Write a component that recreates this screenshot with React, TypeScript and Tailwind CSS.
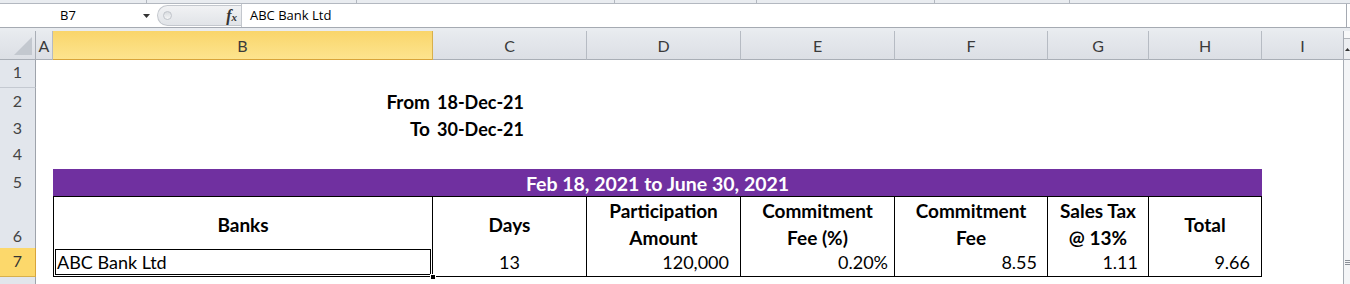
import React from "react";

const COLS = "grid grid-cols-[36px_17px_380px_154px_154px_154px_153px_101px_113px_81px_7px]";
const FONT = { fontFamily: "Lato, 'Open Sans', sans-serif" };

function ColHeader({ label, selected, last }: { label: string; selected?: boolean; last?: boolean }) {
  return (
    <div
      className={
        "flex items-center justify-center pt-[2px] text-[16px] border-b " +
        (selected
          ? "bg-gradient-to-b from-[#f9d56a] to-[#fde48e] border-r border-r-[#d8b04c] border-b-[#d8a43a] text-[#3a3a3a]"
          : "bg-gradient-to-b from-[#e8ebef] to-[#dcdfe5] border-b-[#a9aeb6] text-[#3a3a3a] " + (last ? "" : "border-r border-r-[#b6bbc3]"))
      }
    >
      {label}
    </div>
  );
}

function RowHeader({ n, selected }: { n?: number; selected?: boolean }) {
  return (
    <div
      className={
        "flex items-end justify-center pb-[3px] text-[16px] border-r border-b " +
        (selected
          ? "bg-[#fcd86b] border-r-[#d8a43a] border-b-[#d8b04c] text-[#333]"
          : "bg-[#e2e6ec] border-r-[#9ea3ab] border-b-[#c4c9d1] text-[#444]")
      }
    >
      {n}
    </div>
  );
}

function Scroll({ grip }: { grip?: boolean }) {
  return (
    <div className="bg-[#f4f5f7] border-l border-[#a7acb4] flex items-center justify-end">
      {grip ? (
        <div className="flex flex-col gap-[1px]">
          <div className="w-[5px] h-px bg-[#8a8f97]" />
          <div className="w-[5px] h-px bg-[#8a8f97]" />
          <div className="w-[5px] h-px bg-[#8a8f97]" />
        </div>
      ) : null}
    </div>
  );
}

function EmptyCells({ count }: { count: number }) {
  return (
    <>
      {Array.from({ length: count }).map((_, i) => (
        <div key={i} className="bg-white" />
      ))}
    </>
  );
}

export default function App() {
  const th = "flex items-center justify-center text-center font-bold text-[19px] leading-[27px] text-black border-r border-t border-b border-black bg-white";
  const td = "flex items-center text-[18px] text-black border-r border-b border-black bg-white";
  return (
    <div className="w-[1350px] h-[284px] overflow-hidden bg-white select-none" style={FONT}>
      {/* ribbon bottom strip */}
      <div className="flex h-[4px] bg-[#e9ecf0] border-b border-[#b3b8c0]">
        <div className="w-[147px] border-r border-[#b3b8c0]" />
        <div className="w-[210px] border-r border-[#b3b8c0]" />
        <div className="w-[258px] border-r border-[#b3b8c0]" />
        <div className="w-[142px] border-r border-[#b3b8c0]" />
        <div className="w-[178px] border-r border-[#b3b8c0]" />
        <div className="w-[135px] border-r border-[#b3b8c0]" />
        <div className="flex-1" />
      </div>
      {/* formula bar */}
      <div className="flex h-[24px] border-b border-[#a5aab2] bg-white" style={{ fontFamily: "'Open Sans', 'Noto Sans', sans-serif" }}>
        <div className="w-[136px] flex items-center justify-center text-[13px] text-black">B7</div>
        <div className="w-[21px] flex items-center justify-center">
          <svg width="7" height="4" viewBox="0 0 7 4"><polygon points="0,0 7,0 3.5,4" fill="#333" /></svg>
        </div>
        <div className="w-[84px] flex items-center rounded-l-full bg-gradient-to-b from-[#f1f2f4] to-[#e1e4e8] border-l border-t border-b border-[#c3c7cd] my-[1px]">
          <div className="ml-[5px] w-[9px] h-[9px] rounded-full bg-gradient-to-b from-[#d9dce0] to-[#f5f6f7] border border-[#c0c4ca]" />
          <div className="flex-1" />
          <span className="mr-[4px] italic font-bold text-[16px] leading-none text-[#333]" style={{ fontFamily: "'Liberation Serif', serif" }}>
            f<span className="text-[11px]">x</span>
          </span>
        </div>
        <div className="flex-1 flex items-center pl-[8px] text-[13px] text-black border-l border-[#c3c7cd] border-r border-r-[#a5aab2] mr-[3px]">
          ABC Bank Ltd
        </div>
      </div>
      <div className="h-[3px] bg-[#e9ecf0]" />

      {/* column header */}
      <div className={COLS + " h-[29px]"}>
        <div className="relative bg-gradient-to-b from-[#e8ebef] to-[#dcdfe5] border-r border-b border-[#a9aeb6]">
          <svg className="absolute left-0 top-0" width="36" height="29" viewBox="0 0 36 29">
            <polygon points="32,6 32,24 14,24" fill="#c3c8cf" />
          </svg>
        </div>
        <ColHeader label="A" />
        <ColHeader label="B" selected />
        <ColHeader label="C" />
        <ColHeader label="D" />
        <ColHeader label="E" />
        <ColHeader label="F" />
        <ColHeader label="G" />
        <ColHeader label="H" />
        <ColHeader label="I" last />
        <div className="bg-[#eceef1] border-l border-b border-[#a7acb4] flex flex-col">
          <div className="h-[8px] border-b border-[#b0b4ba] bg-[#f7f8f9]" />
          <div className="flex-1 flex items-center justify-center">
            <svg width="5" height="3" viewBox="0 0 5 3"><polygon points="2.5,0 5,3 0,3" fill="#333" /></svg>
          </div>
        </div>
      </div>

      {/* row 1 */}
      <div className={COLS + " h-[28px]"}>
        <RowHeader n={1} />
        <EmptyCells count={9} />
        <Scroll />
      </div>
      {/* row 2 */}
      <div className={COLS + " h-[27px]"}>
        <RowHeader n={2} />
        <div />
        <div className="flex items-center justify-end pr-[3px] font-bold text-[19px]">From</div>
        <div className="flex items-center pl-[4px] font-bold text-[18px] whitespace-nowrap">18-Dec-21</div>
        <EmptyCells count={6} />
        <Scroll />
      </div>
      {/* row 3 */}
      <div className={COLS + " h-[27px]"}>
        <RowHeader n={3} />
        <div />
        <div className="flex items-center justify-end pr-[3px] font-bold text-[19px]">To</div>
        <div className="flex items-center pl-[4px] font-bold text-[18px] whitespace-nowrap">30-Dec-21</div>
        <EmptyCells count={6} />
        <Scroll />
      </div>
      {/* row 4 */}
      <div className={COLS + " h-[27px]"}>
        <RowHeader n={4} />
        <EmptyCells count={9} />
        <Scroll />
      </div>
      {/* row 5 */}
      <div className={COLS + " h-[27px]"}>
        <RowHeader n={5} />
        <div />
        <div className="col-span-7 bg-[#7030a0] flex items-center justify-center text-white font-bold text-[19.5px]">
          Feb 18, 2021 to June 30, 2021
        </div>
        <div />
        <Scroll />
      </div>
      {/* row 6 */}
      <div className={COLS + " h-[52px]"}>
        <RowHeader n={6} />
        <div />
        <div className={th + " border-l"}>Banks</div>
        <div className={th}>Days</div>
        <div className={th}>Participation<br />Amount</div>
        <div className={th}>Commitment<br />Fee (%)</div>
        <div className={th}>Commitment<br />Fee</div>
        <div className={th}>Sales Tax<br />@ 13%</div>
        <div className={th}>Total</div>
        <div />
        <Scroll />
      </div>
      {/* row 7 */}
      <div className={COLS + " h-[29px]"}>
        <RowHeader n={7} selected />
        <div />
        <div className={td + " border-l pl-[3px] relative"}>
          ABC Bank Ltd
          <div className="absolute inset-[1px] border border-black pointer-events-none" />
          <div className="absolute -right-[4px] -bottom-[4px] w-[6px] h-[6px] bg-black border border-white" />
        </div>
        <div className={td + " justify-center"}>13</div>
        <div className={td + " justify-end pr-[11px]"}>120,000</div>
        <div className={td + " justify-end pr-[6px]"}>0.20%</div>
        <div className={td + " justify-end pr-[10px]"}>8.55</div>
        <div className={td + " justify-end pr-[10px]"}>1.11</div>
        <div className={td + " justify-end pr-[11px]"}>9.66</div>
        <div />
        <Scroll grip />
      </div>
      {/* row 8 */}
      <div className={COLS + " h-[20px]"}>
        <RowHeader />
        <EmptyCells count={9} />
        <Scroll />
      </div>
    </div>
  );
}
